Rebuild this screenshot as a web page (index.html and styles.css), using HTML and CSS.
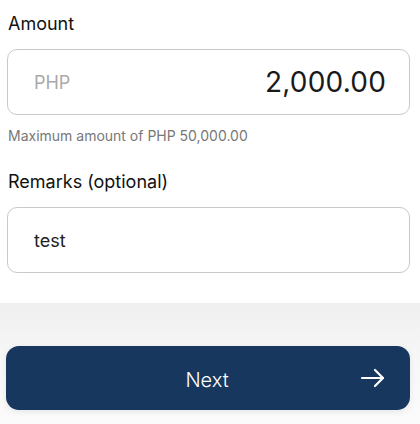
FILE: index.html
```html
<!DOCTYPE html>
<html>
<head>
<meta charset="utf-8">
<link rel="stylesheet" href="styles.css">
</head>
<body>
<div class="form">
  <div class="label">Amount</div>
  <div class="field amount">
    <span class="currency">PHP</span>
    <span class="value">2,000.00</span>
  </div>
  <div class="hint">Maximum amount of PHP 50,000.00</div>
  <div class="label label-remarks">Remarks (optional)</div>
  <div class="field remarks">
    <span class="text">test</span>
  </div>
</div>
<div class="footer">
  <button class="next">
    <span class="next-label">Next</span>
    <svg class="arrow" width="26" height="20" viewBox="0 0 26 20" fill="none" stroke="#fff" stroke-width="2.2" stroke-linecap="round" stroke-linejoin="round">
      <path d="M2 10H23"/>
      <path d="M15 2L23 10L15 18"/>
    </svg>
  </button>
</div>
</body>
</html>
```
FILE: styles.css
```css
* { box-sizing: border-box; }
html, body {
  margin: 0;
  padding: 0;
  background: #fff;
  font-family: Inter, "Noto Sans", sans-serif;
  color: #1c1c1c;
}
body { width: 420px; height: 424px; overflow: hidden; }
.form {
  padding: 12px 10px 0 7px;
  height: 303px;
}
.label {
  font-size: 18px;
  line-height: 24px;
  padding-left: 1px;
  margin-bottom: 13px;
  color: #111;
}
.label-remarks { margin-top: 26px; margin-bottom: 13px; }
.field {
  height: 66px;
  border: 1px solid #c9c9c9;
  border-radius: 10px;
  display: flex;
  align-items: center;
  padding: 0 23px 0 26px;
  background: #fff;
}
.currency {
  font-size: 18px;
  color: #a9a9a9;
}
.value {
  margin-left: auto;
  font-size: 28px;
  color: #1a1a1a;
  letter-spacing: 0.2px;
}
.hint {
  font-size: 14px;
  line-height: 17px;
  color: #777;
  margin-top: 12px;
  padding-left: 1px;
}
.text {
  font-size: 18px;
  color: #222;
}
.footer {
  height: 121px;
  background: linear-gradient(#efefef, #f6f6f6 40%, #fbfbfb);
  padding: 43px 10px 0 6px;
}
.next {
  width: 100%;
  height: 64px;
  border: none;
  border-radius: 13px;
  background: #17375e;
  color: #fff;
  display: flex;
  align-items: center;
  justify-content: center;
  position: relative;
  font-family: inherit;
  box-shadow: 0 2px 6px rgba(0,0,0,0.08);
}
.next-label {
  font-size: 20px;
  font-weight: 300;
  margin-left: -2px;
  margin-top: 3px;
}
.arrow {
  position: absolute;
  right: 24px;
  top: 22px;
}
```
